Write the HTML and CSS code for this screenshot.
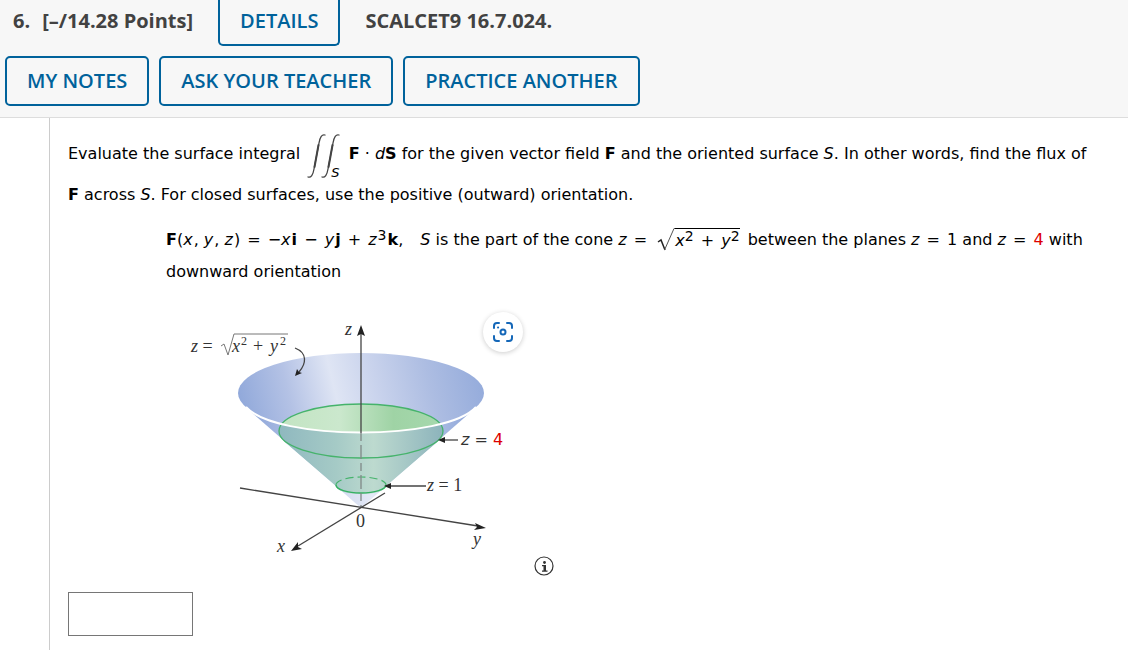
FILE: index.html
```html
<!DOCTYPE html>
<html lang="en">
<head>
  <meta charset="UTF-8">
  <title>SCALCET9 16.7.024</title>
  <meta name="viewport" content="width=device-width, initial-scale=1.0">
  <link rel="stylesheet" href="styles.css">
</head>
<body>

<!-- Question Header -->
<header class="question-header">
  <div class="title-row">
    <h2 class="points"><span>6.</span><span>[–/14.28 Points]</span></h2>
    <button class="btn btn-details" type="button">DETAILS</button>
    <h2>SCALCET9 16.7.024.</h2>
  </div>
  <div class="button-row">
    <button class="btn" type="button">MY NOTES</button>
    <button class="btn" type="button">ASK YOUR TEACHER</button>
    <button class="btn" type="button">PRACTICE ANOTHER</button>
  </div>
</header>

<!-- Question Body -->
<main class="question">
  <p class="prompt">Evaluate the surface integral <span class="integral"><svg width="34" height="46" viewBox="0 0 34 46" aria-hidden="true"><g fill="none" stroke="#444" stroke-linecap="round"><path d="M1 44c3 1 5-2 6-8L12 10c1-6 3-9 6-8" stroke-width="1.3"/><path d="M7.500 34L11.500 12" stroke-width="2"/><path d="M15 44c3 1 5-2 6-8L26 10c1-6 3-9 6-8" stroke-width="1.300"/><path d="M21.500 34L25.500 12" stroke-width="2"/></g></svg><i>S</i></span> <b>F</b> · <i>d</i><b>S</b> for the given vector field <b>F</b> and the oriented surface <i>S</i>. In other words, find the flux of <b>F</b> across <i>S</i>. For closed surfaces, use the positive (outward) orientation.</p>

  <div class="problem">
    <p><span class="formula"><b>F</b>(<i>x</i>, <i>y</i>, <i>z</i>) <span class="op">=</span> −<i>x</i><b>i</b> <span class="op">−</span> <i>y</i><b>j</b> <span class="op">+</span> <i>z</i><sup>3</sup><b>k</b>,</span> <i>S</i> is the part of the cone <i>z</i> <span class="op">=</span> <span class="root"><svg width="18" height="24" viewBox="0 0 18 24" aria-hidden="true"><path d="M1 14l3-2 4 10" fill="none" stroke="#222" stroke-width="1.500"/><path d="M7.500 22L17 .5h1" fill="none" stroke="#555"/></svg><span class="radicand"><i>x</i><sup>2</sup> <span class="op">+</span> <i>y</i><sup>2</sup></span></span> between the planes <i>z</i> <span class="op">=</span> 1 and <i>z</i> <span class="op">=</span> <span class="red">4</span> with downward orientation</p>

    <div class="figure-row">
      <figure class="figure">
        <svg width="360" height="274" viewBox="166 302 360 274" role="img" aria-label="Cone with the planes z = 1 and z = 4">
          <defs>
            <linearGradient id="inside" gradientUnits="userSpaceOnUse" x1="238" y1="400" x2="484" y2="340">
              <stop offset="0" stop-color="#90a8da"/>
              <stop offset=".2" stop-color="#b4c2e5"/>
              <stop offset=".38" stop-color="#dfe5f4"/>
              <stop offset=".55" stop-color="#c8d2ec"/>
              <stop offset=".75" stop-color="#adbde2"/>
              <stop offset="1" stop-color="#90a8da"/>
            </linearGradient>
            <linearGradient id="outside" gradientUnits="userSpaceOnUse" x1="252" y1="0" x2="470" y2="0">
              <stop offset="0" stop-color="#8ea6d9"/>
              <stop offset=".35" stop-color="#cbd5ed"/>
              <stop offset=".55" stop-color="#e4e9f6"/>
              <stop offset="1" stop-color="#8ea6d9"/>
            </linearGradient>
            <linearGradient id="band" gradientUnits="userSpaceOnUse" x1="279" y1="0" x2="442" y2="0">
              <stop offset="0" stop-color="#8fb8bf"/>
              <stop offset=".35" stop-color="#a5cac6"/>
              <stop offset=".58" stop-color="#bddacf"/>
              <stop offset="1" stop-color="#8db4bc"/>
            </linearGradient>
            <linearGradient id="disc" gradientUnits="userSpaceOnUse" x1="285" y1="0" x2="440" y2="0">
              <stop offset="0" stop-color="#c3e4c3"/>
              <stop offset=".35" stop-color="#cbe8cd"/>
              <stop offset=".7" stop-color="#9fd3a5"/>
              <stop offset="1" stop-color="#a6d8ad"/>
            </linearGradient>
            <clipPath id="rim"><ellipse cx="361" cy="393" rx="123" ry="40"/></clipPath>
          </defs>

          <!-- cone -->
          <path d="M250 411L361 508L472 411Z" fill="url(#outside)"/>
          <path d="M279 431A82 27 0 0 1 443 431Q443 437 436 443L386 486A25 8 0 0 1 336 486L286 443Q279 437 279 431Z" fill="url(#band)"/>
          <ellipse cx="361" cy="393" rx="123" ry="40" fill="url(#inside)"/>
          <g clip-path="url(#rim)"><ellipse cx="361" cy="431" rx="82" ry="27" fill="url(#disc)"/></g>
          <ellipse cx="361" cy="431" rx="82" ry="27" fill="none" stroke="#45b36b" stroke-width="1.300"/>
          <path d="M246 407C276 441 446 441 476 407" fill="none" stroke="#fff" stroke-width="2"/>
          <path d="M336 485A25 8 0 0 0 386 485" fill="none" stroke="#34b162" stroke-width="1.500"/>
          <path d="M336 485A25 8 0 0 1 386 485" fill="none" stroke="#45b36b" stroke-width="1.200" stroke-dasharray="8 4"/>

          <!-- axes -->
          <g fill="none" stroke="#444" stroke-width="1.300">
            <path d="M361 332V433"/>
            <path d="M361 433V508" stroke="#808987" stroke-dasharray="8 4 14 4"/>
            <path d="M240 488L478 526"/>
            <path d="M385 493L298 546"/>
            <path d="M458 440H445"/>
            <path d="M426 486H391"/>
            <path d="M295 348C308 353 306 364 299 372"/>
          </g>
          <g fill="#222">
            <path d="M361 325l-4 11 4-2 4 2z"/>
            <path d="M486 528l-11-5 2 4-3 3z"/>
            <path d="M291 551l7-9v5l4 2z"/>
            <path d="M438 440l7-3v6z"/>
            <path d="M384 486l7-3v6z"/>
            <path d="M295 376l2-7 2 3 3 1z"/>
          </g>

          <!-- labels -->
          <g class="label">
            <text x="191" y="352"><tspan font-style="italic">z</tspan> =</text>
            <path d="M221 346l3-2 4 11 6-21h54" fill="none" stroke="#777"/>
            <text x="232" y="352" font-style="italic">x</text>
            <text x="241" y="345" class="power">2</text>
            <text x="253" y="352">+</text>
            <text x="270" y="352" font-style="italic">y</text>
            <text x="280" y="345" class="power">2</text>
            <text x="345" y="335" font-style="italic">z</text>
            <text x="427" y="491"><tspan font-style="italic">z</tspan> = 1</text>
            <text x="356" y="527">0</text>
            <text x="277" y="552" font-style="italic">x</text>
            <text x="473" y="545" font-style="italic">y</text>
          </g>
          <text x="461" y="445" class="plane-label"><tspan font-style="italic">z</tspan> = <tspan class="red">4</tspan></text>
        </svg>
        <button class="lens" type="button" aria-label="Visual search">
          <svg width="22" height="22" viewBox="0 0 22 22" fill="none" stroke="#1467b8" stroke-width="2" stroke-linecap="round">
            <path d="M2 7V5a3 3 0 0 1 3-3h2M15 2h2a3 3 0 0 1 3 3v2M20 15v2a3 3 0 0 1-3 3h-2M7 20H5a3 3 0 0 1-3-3v-2"/>
            <circle cx="11" cy="11" r="2.500"/>
            <path d="M6 6.500h.1"/>
          </svg>
        </button>
      </figure>
      <button class="info" type="button" aria-label="Image description">
        <svg width="20" height="20" viewBox="0 0 20 20">
          <circle cx="10" cy="10" r="9" fill="none" stroke="#333" stroke-width="1.200"/>
          <circle cx="10.500" cy="6.500" r="1.400" fill="#333"/>
          <path d="M8 9H12v5.500h1.500v1.300H8v-1.300h1.500V10.300H8z" fill="#333"/>
        </svg>
      </button>
    </div>
  </div>

  <input class="answer" type="text" aria-label="Answer">
</main>

</body>
</html>
```
FILE: styles.css
```css
* { box-sizing: border-box; }

body {
  font-family: "DejaVu Sans", Verdana, sans-serif;
  font-size: 16px;
  margin: 0;
  background: #fff;
  color: #000;
}

/* Question Header */
.question-header {
  background: #f7f7f7;
  border-bottom: 1px solid #ddd;
  padding: 0 5px 11px;
  font-family: "Open Sans", sans-serif;
}

.title-row {
  display: flex;
  align-items: flex-start;
  gap: 25px;
  padding-left: 8px;
}

.question-header h2 {
  margin: 0;
  font-size: 20px;
  line-height: 42px;
  font-weight: 700;
  color: #424242;
}

.title-row .points {
  display: flex;
  gap: 12px;
}

.button-row {
  display: flex;
  gap: 10px;
  margin-top: 10px;
}

.btn {
  height: 50px;
  padding: 0 20px 2px;
  border: 2px solid #00629b;
  border-radius: 5px;
  background: transparent;
  color: #00629b;
  font-family: inherit;
  font-size: 20px;
  font-weight: 600;
  cursor: pointer;
}

.btn-details {
  height: 46px;
  padding-bottom: 4px;
  border-top: none;
  border-radius: 0 0 5px 5px;
}

/* Question Body */
.question {
  margin-left: 49px;
  padding: 11px 18px 14px;
  border-left: 1px solid #ccc;
  min-height: calc(100vh - 118px);
}

.question p {
  margin: 0;
  line-height: 32px;
}

.question .prompt { padding-right: 16px; }

.integral {
  display: inline-flex;
  align-items: flex-end;
  vertical-align: middle;
  margin: 0 4px 0 2px;
  padding-top: 4px;
}

.integral i {
  margin-left: -10px;
  font-size: 13px;
  line-height: 12px;
}

.op { margin: 0 2px; }

.problem {
  padding: 13px 0 0 98px;
}

.formula { margin-right: 12px; }
.formula i, .formula sup { margin-right: 1px; }

sup {
  font-size: 14px;
  line-height: 0;
  vertical-align: 5px;
}

.root {
  display: inline-flex;
  vertical-align: middle;
  margin: 0 3px;
}

.radicand {
  border-top: 1px solid #000;
  line-height: 24px;
}

.red { color: #d00; fill: #d00; }

/* Figure */
.figure-row {
  display: flex;
  align-items: flex-end;
  gap: 8px;
  margin-top: 14px;
}

.figure {
  position: relative;
  margin: 0;
}

.figure svg { display: block; }

.label {
  font-family: "Liberation Serif", serif;
  font-size: 18px;
  fill: #333;
}

.label .power { font-size: 12px; }

.plane-label { font-size: 16px; fill: #333; }

.lens {
  position: absolute;
  top: 10px;
  right: 3px;
  display: flex;
  align-items: center;
  justify-content: center;
  width: 40px;
  height: 40px;
  padding: 0;
  border: none;
  border-radius: 50%;
  background: #fff;
  box-shadow: 0 1px 5px rgba(0,0,0,0.2);
}

.info {
  padding: 0;
  border: none;
  background: none;
}

.info svg { display: block; }

.answer {
  display: block;
  width: 125px;
  height: 44px;
  margin-top: 16px;
  border: 1px solid #767676;
  font-size: 16px;
}
```
